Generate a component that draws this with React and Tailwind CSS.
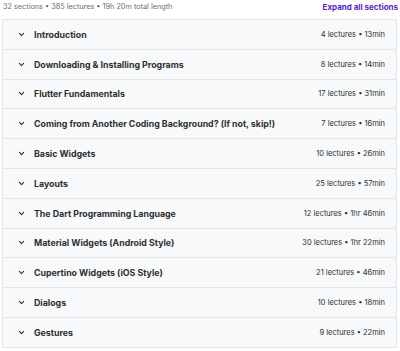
const sections = [
  { title: "Introduction", meta: "4 lectures • 13min" },
  { title: "Downloading & Installing Programs", meta: "8 lectures • 14min" },
  { title: "Flutter Fundamentals", meta: "17 lectures • 31min" },
  { title: "Coming from Another Coding Background? (If not, skip!)", meta: "7 lectures • 16min" },
  { title: "Basic Widgets", meta: "10 lectures • 26min" },
  { title: "Layouts", meta: "25 lectures • 57min" },
  { title: "The Dart Programming Language", meta: "12 lectures • 1hr 46min" },
  { title: "Material Widgets (Android Style)", meta: "30 lectures • 1hr 22min" },
  { title: "Cupertino Widgets (iOS Style)", meta: "21 lectures • 46min" },
  { title: "Dialogs", meta: "10 lectures • 18min" },
  { title: "Gestures", meta: "9 lectures • 22min" },
];

function Chevron() {
  return (
    <svg width="7" height="7" viewBox="0 0 10 10" className="text-[#2d2f31]">
      <path d="M2 3.5 L5 6.5 L8 3.5" fill="none" stroke="currentColor" strokeWidth="1.6" strokeLinecap="round" strokeLinejoin="round" />
    </svg>
  );
}

export default function App() {
  return (
    <div className="w-[400px] h-[351px] bg-white px-[2px] font-['Inter',sans-serif] text-[#2d2f31] overflow-hidden">
      <div className="h-[19px] flex items-center justify-between pl-[1px] pb-[5px]">
        <span className="text-[7.3px] text-[#6a6f73]">32 sections • 385 lectures • 19h 20m total length</span>
        <span className="text-[8px] font-bold text-[#5624d0]">Expand all sections</span>
      </div>
      <div className="w-[395px] border-t border-x border-[#e4e7ea]">
        {sections.map((s) => (
          <div key={s.title} className="h-[29.8px] border-b border-[#e4e7ea] bg-[#f7f9fa] flex items-center pl-[15px] pr-[11px]">
            <Chevron />
            <span className="ml-[9px] text-[8.8px] font-bold text-[#2d2f31] flex-1">{s.title}</span>
            <span className="text-[7.5px] text-[#2d2f31]">{s.meta}</span>
          </div>
        ))}
      </div>
    </div>
  );
}
